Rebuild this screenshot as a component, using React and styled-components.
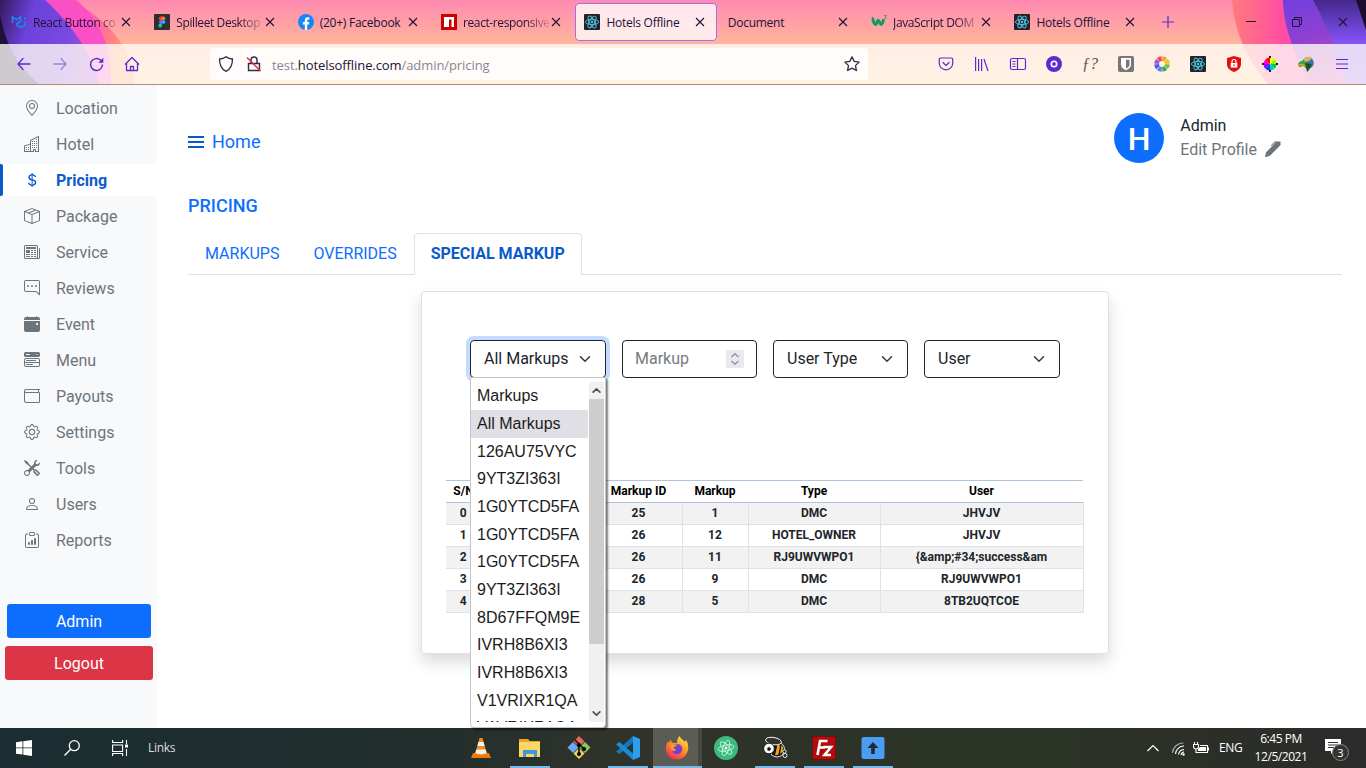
import React from "react";
import styled, { createGlobalStyle, css } from "styled-components";
import {
  BsGeoAlt, BsBuildings, BsCurrencyDollar, BsBoxSeam, BsNewspaper, BsChatRightDots,
  BsCalendarEventFill, BsMenuButtonWideFill, BsWallet, BsGear, BsTools, BsPerson,
  BsClipboardData, BsPenFill,
} from "react-icons/bs";

const GlobalStyle = createGlobalStyle`
  * { box-sizing: border-box; }
  body { margin: 0; background: #fff; overflow: hidden; font-family: Roboto, "Liberation Sans", sans-serif; font-size: 16px; line-height: 24px; color: #212529; }
  svg { display: block; flex: none; }
`;

const Screen = styled.div`
  width: 1366px;
  height: 768px;
  display: flex;
  flex-direction: column;
  overflow: hidden;
`;

/* ---------- browser chrome ---------- */
const Chrome = styled.header`
  position: relative;
  height: 85px;
  flex: none;
  border-bottom: 1px solid #b58a78;
  font-family: "Open Sans", "Noto Sans", sans-serif;
  color: #20123a;
`;
const ThemeArt = styled.svg`
  position: absolute;
  inset: 0;
`;
const TabStrip = styled.div`
  position: relative;
  height: 44px;
  padding: 3px 0 3px 2px;
  display: flex;
`;
const BrowserTab = styled.div`
  width: 143.35px;
  height: 38px;
  flex: none;
  display: flex;
  align-items: center;
  padding: 0 14px 0 9px;
  gap: 6px;
  ${(p) => p.$active && css`
    margin-right: 1.35px;
    width: 142px;
    padding-left: 8px;
    padding-right: 11px;
    border: 1px solid #a36df2;
    border-radius: 4px;
    background: rgba(255, 244, 246, 0.86);
  `}
`;
const TabTitle = styled.span`
  flex: 1;
  overflow: hidden;
  white-space: nowrap;
  font-size: 12px;
  line-height: 18px;
  padding-top: 2px;
  letter-spacing: ${(p) => (p.$fade ? "-0.4px" : "-0.25px")};
  margin-right: -4px;
  ${(p) => p.$fade && css`
    mask-image: linear-gradient(to right, #000 72%, rgba(0, 0, 0, 0.15) 100%);
  `}
`;
const NewTab = styled.div`
  display: flex;
  align-items: center;
  padding-left: 13px;
`;
const WindowButtons = styled.div`
  margin-left: auto;
  display: flex;
  align-items: center;
  gap: 36px;
  padding-right: 18px;
`;
const NavBar = styled.div`
  position: relative;
  height: 40px;
  display: flex;
  align-items: center;
  background: rgba(255, 252, 248, 0.79);
`;
const NavButtons = styled.div`
  width: 210px;
  display: flex;
  padding-left: 6px;
`;
const ToolButton = styled.div`
  width: 36px;
  height: 32px;
  display: flex;
  align-items: center;
  justify-content: center;
  color: #5a2bd0;
  opacity: ${(p) => (p.$dim ? 0.5 : 1)};
`;
const UrlBar = styled.div`
  width: 658px;
  height: 32px;
  border-radius: 4px;
  background: #fffcf9;
  display: flex;
  align-items: center;
  padding: 0 8px;
  color: #8b8496;
  font-size: 13px;
  svg + svg { margin-left: 12px; }
`;
const UrlText = styled.span`
  flex: 1;
  margin-left: 10px;
  padding-top: 2px;
  letter-spacing: -0.08px;
  b { font-weight: 400; color: #20123a; }
`;
const Extensions = styled.div`
  display: flex;
  margin-left: auto;
  padding-right: 6px;
`;
const FontQuery = styled.span`
  font: italic 16px "Liberation Serif", serif;
  color: #555;
`;

/* ---------- page ---------- */
const Page = styled.div`
  flex: 1;
  min-height: 0;
  display: flex;
`;
const Sidebar = styled.aside`
  width: 157px;
  background: #f8f9fa;
  padding-top: 7px;
  display: flex;
  flex-direction: column;
`;
const MenuItem = styled.div`
  height: 32px;
  margin-bottom: 4px;
  display: flex;
  align-items: center;
  gap: 16px;
  padding-left: 24px;
  line-height: 26px;
  span { padding-top: 2px; }
  color: #6c757d;
  ${(p) => p.$active && css`
    background: #fff;
    padding-left: 21px;
    color: #0a5acc;
    font-weight: 700;
    &::before {
      content: "";
      width: 3px;
      height: 32px;
      margin: 0 -16px 0 -21px;
      border-radius: 0 2px 2px 0;
      background: #0a5acc;
    }
    svg { margin-left: 21px; }
  `}
`;
const SideButtons = styled.div`
  padding-top: 44px;
  display: flex;
  flex-direction: column;
  align-items: center;
  gap: 8px;
`;
const SideButton = styled.button`
  width: ${(p) => p.$w}px;
  height: 34px;
  margin-left: 1px;
  border: 0;
  border-radius: 3.2px;
  background: ${(p) => p.$bg};
  color: #fff;
  font: 400 16px/24px Roboto, sans-serif;
  padding: 2px 0 0;
`;
const Main = styled.main`
  flex: 1;
  padding: 28px 24px 0 31px;
  display: flex;
  flex-direction: column;
`;
const TopBar = styled.div`
  height: 50px;
  display: flex;
  justify-content: space-between;
  padding-right: 61px;
`;
const HomeLink = styled.a`
  display: flex;
  align-items: center;
  align-self: flex-start;
  gap: 8px;
  margin-top: 17px;
  font-size: 18px;
  color: #0d6efd;
`;
const Profile = styled.div`
  display: flex;
  gap: 16px;
`;
const ProfileText = styled.div`
  padding-top: 1px;
`;
const Avatar = styled.div`
  width: 50px;
  height: 50px;
  border-radius: 50%;
  background: #0d6efd;
  color: #fff;
  font-size: 32px;
  font-weight: 500;
  line-height: 53px;
  text-align: center;
`;
const EditProfile = styled.div`
  display: flex;
  align-items: center;
  gap: 8px;
  color: #6c757d;
  svg { margin-top: -2px; }
`;
const PageTitle = styled.h1`
  margin: 31px 0 0;
  font-size: 18px;
  line-height: 24px;
  font-weight: 500;
  color: #0d6efd;
`;
const Tabs = styled.nav`
  height: 42px;
  margin-top: 15px;
  margin-bottom: 16px;
  border-bottom: 1px solid #dee2e6;
  display: flex;
`;
const TabLink = styled.a`
  height: 42px;
  padding: 8px 16px;
  border: 1px solid transparent;
  line-height: 23px;
  color: #0d6efd;
  ${(p) => p.$active && css`
    border-color: #dee2e6 #dee2e6 #fff;
    border-radius: 4px 4px 0 0;
    background: #fff;
    color: #0a5acc;
    font-weight: 700;
  `}
`;
const Card = styled.section`
  width: 688px;
  height: 363px;
  align-self: center;
  border: 1px solid #dee2e6;
  border-radius: 4px;
  box-shadow: 0 8px 16px rgba(0, 0, 0, 0.15);
  padding: 48px 24px 0;
`;
const Filters = styled.div`
  display: grid;
  grid-template-columns: 136px 135px 135px 136px;
  gap: 16px;
  padding: 0 24px;
`;
const Field = styled.div`
  position: relative;
  height: 38px;
  border: 1px solid #212529;
  border-radius: 4px;
  padding: 0 14px 0 ${(p) => (p.$placeholder ? 12 : 13)}px;
  display: flex;
  align-items: center;
  justify-content: space-between;
  line-height: 36px;
  color: ${(p) => (p.$placeholder ? "#757b81" : "#212529")};
  box-shadow: ${(p) => (p.$focus ? "0 0 0 4px #c2dbfe" : "none")};
`;
const Spinner = styled.span`
  width: 18px;
  height: 18px;
  background: #e9e9ed;
  display: flex;
  align-items: center;
  justify-content: center;
  margin-right: -2px;
`;
const Dropdown = styled.div`
  position: absolute;
  z-index: 2;
  left: -1px;
  top: 36px;
  width: 136px;
  height: 351px;
  border: 1px solid #c4c4cc;
  border-radius: 2px 2px 4px 4px;
  background: #fff;
  box-shadow: 2px 2px 2px rgba(0, 0, 0, 0.5);
  display: flex;
  padding: 4px 1px 5px 0;
`;
const OptionList = styled.div`
  flex: 1;
  overflow: hidden;
  padding-top: 0.35px;
`;
const Option = styled.div`
  height: 27.67px;
  padding-left: 6px;
  font: 16px/27.67px "Liberation Sans", sans-serif;
  color: #1c1b22;
  background: ${(p) => (p.$selected ? "#e0dfe6" : "transparent")};
  margin-right: 1px;
`;
const ScrollBar = styled.div`
  width: 15px;
  background: #f0f0f0;
  display: flex;
  flex-direction: column;
  justify-content: space-between;
  align-items: center;
`;
const Arrow = styled.div`
  height: 17px;
  display: flex;
  align-items: center;
`;
const Thumb = styled.div`
  width: 15px;
  height: 245px;
  background: #cdcdcd;
  margin-bottom: auto;
`;
const Table = styled.table`
  width: 637px;
  margin-top: 102px;
  border-collapse: collapse;
  table-layout: fixed;
  font-size: 12px;
  line-height: 16px;
  font-weight: 700;
  text-align: center;
  th, td { height: 22px; padding: 0 0 1px; }
  td { padding-bottom: 2px; }
  th { color: #000; border-top: 1px solid #b0c4de; border-bottom: 1px solid #b0c4de; }
  td { border-right: 1px solid #dee2e6; border-bottom: 1px solid #dee2e6; }
  tbody tr:nth-child(odd) { background: #f2f2f2; }
`;

/* ---------- taskbar ---------- */
const Taskbar = styled.footer`
  height: 40px;
  flex: none;
  display: flex;
  background: linear-gradient(to right, #1b2d31 0, #1f2e2e 20%, #232f2d 33%, #30332a 45%, #2b3326 75%, #2c2f28 88%, #2b2c2b);
  color: #fff;
  font: 12px/18px "Open Sans", "Noto Sans", sans-serif;
`;
const StartArea = styled.div`
  width: 457px;
  display: flex;
  align-items: center;
`;
const StartCell = styled.div`
  width: 48px;
  display: flex;
  justify-content: center;
`;
const LinksLabel = styled.span`
  margin-left: 4px;
  color: #ddd;
  letter-spacing: -0.3px;
`;
const TaskIcon = styled.div`
  width: 49px;
  height: 40px;
  display: flex;
  align-items: center;
  justify-content: center;
  padding-right: 1px;
  background: ${(p) =>
    p.$active
      ? "linear-gradient(#76b9ed, #76b9ed) no-repeat 0 100% / 100% 2px, linear-gradient(to right, #5b5d55 45px, #464840 45px)"
      : p.$open
      ? "linear-gradient(#76b9ed, #76b9ed) no-repeat 4px 100% / 40px 2px"
      : "none"};
`;
const Tray = styled.div`
  margin-left: auto;
  display: flex;
  align-items: center;
  padding-right: 16px;
`;
const Battery = styled.svg`
  margin-left: 6px;
`;
const Lang = styled.span`
  margin: 0 0 0 10px;
  width: 24px;
  letter-spacing: -0.3px;
`;
const Clock = styled.div`
  width: 62px;
  margin: 0 12px 0 7px;
  text-align: center;
  letter-spacing: -0.45px;
`;

/* ---------- drawings ---------- */
const Close = () => (
  <svg width="10" height="10" viewBox="0 0 10 10" stroke="#20123a" strokeWidth="1.1"><path d="M1 1l8 8M9 1L1 9" /></svg>
);
const ReactLogo = () => (
  <svg width="16" height="16" viewBox="0 0 16 16" fill="none" stroke="#56c7e4" strokeWidth=".9">
    <rect width="16" height="16" rx="1" fill="#20232a" stroke="none" />
    <ellipse cx="8" cy="8" rx="6.6" ry="2.6" />
    <ellipse cx="8" cy="8" rx="6.6" ry="2.6" transform="rotate(60 8 8)" />
    <ellipse cx="8" cy="8" rx="6.6" ry="2.6" transform="rotate(120 8 8)" />
    <circle cx="8" cy="8" r="1.2" fill="#56c7e4" stroke="none" />
  </svg>
);
const MuiLogo = () => (
  <svg width="16" height="16" viewBox="0 0 16 16" fill="none" stroke="#1b86f0" strokeWidth="1.7">
    <path d="M1.500 9V3l4 2.600 4-2.600v4.500L6 9.600v1.900l4 2.100 4-2.300V7.500M14 3.400v2" />
  </svg>
);
const FigmaLogo = () => (
  <svg width="16" height="16" viewBox="0 0 16 16">
    <rect width="16" height="16" rx="1" fill="#2c2f33" />
    <path d="M8 2.500H6.800a1.900 1.900 0 000 3.800H8z" fill="#f24e1e" /><path d="M8 2.500h1.300a1.900 1.900 0 010 3.800H8z" fill="#ff7262" />
    <path d="M8 6.300H6.800a1.800 1.800 0 000 3.600H8z" fill="#a259ff" /><circle cx="9.600" cy="8.100" r="1.800" fill="#1abcfe" />
    <path d="M8 9.900H6.800a1.800 1.800 0 101.200 1.800z" fill="#0acf83" />
  </svg>
);
const FacebookLogo = () => (
  <svg width="16" height="16" viewBox="0 0 16 16">
    <circle cx="8" cy="8" r="8" fill="#1688f5" />
    <path d="M6.800 16v-5.500H4.900V8h1.900V6.400c0-2 1.200-3.100 3-3.100l1.600.100v2h-1c-1 0-1.200.600-1.200 1.200V8h2.100l-.400 2.500H9.200V16z" fill="#fff" />
  </svg>
);
const NpmLogo = () => (
  <svg width="16" height="16" viewBox="0 0 16 16"><path fill="#cb0000" d="M0 0h16v16H0z" /><path fill="#fff" d="M3 3h10v10h-2.500V5.500H8V13H3z" /></svg>
);
const W3Logo = () => (
  <svg width="16" height="16" viewBox="0 0 16 16" fill="none" stroke="#0a9c62">
    <path strokeWidth="3" d="M.800 4.200c1.500 0 1.800 6.300 3.600 6.300 1.500 0 1.900-4.300 2.800-4.300s1.500 4.300 3 4.300c1.200 0 1.800-2.500 2.400-5.300" />
    <path strokeWidth=".8" d="M13.300 1.500h2L14.200 3c1.500.200 1.200 1.800-.900 1.600" />
  </svg>
);

const TABS = [
  { icon: <MuiLogo />, title: "React Button co", fade: true },
  { icon: <FigmaLogo />, title: "Spilleet Desktop", fade: true },
  { icon: <FacebookLogo />, title: "(20+) Facebook" },
  { icon: <NpmLogo />, title: "react-responsive", fade: true },
  { icon: <ReactLogo />, title: "Hotels Offline", active: true },
  { title: "Document" },
  { icon: <W3Logo />, title: "JavaScript DOM", fade: true },
  { icon: <ReactLogo />, title: "Hotels Offline" },
];

const wheel = ["#f2a33a", "#f0c12c", "#7cc242", "#3aa757", "#4a8df0", "#5a55e8", "#a54fe0", "#f04a4a"];
const vivid = ["#ff0", "#8f0", "#0c4", "#0cc", "#04f", "#80f", "#f0c", "#f00"];
const Petals = () => (
  <svg width="16" height="16" viewBox="-8 -8 16 16">
    {wheel.map((c, i) => (
      <path key={c} d="M-1.200 -3L-2.500 -7.400A7.800 7.800 0 012.500 -7.400L1.200 -3z" fill={c} transform={`rotate(${i * 45 + 22})`} />
    ))}
  </svg>
);
const ColorWheel = () => (
  <svg width="16" height="16" viewBox="-8 -8 16 16">
    {vivid.map((c, i) => (
      <path key={c} d="M0 0L-2.500 -6A6.500 6.500 0 012.500 -6z" fill={c} transform={`rotate(${i * 45 + 22})`} />
    ))}
    <path d="M-8-1h2v2h-2zM6-1h2v2H6zM-1-8h2v2h-2zM-1 6h2v2h-2z" fill="#222" />
  </svg>
);

const EXTENSIONS = [
  <svg width="16" height="16" viewBox="0 0 16 16" fill="none" stroke="currentColor" strokeWidth="1.2" strokeLinecap="round"><path d="M2.500 2h11A1.200 1.200 0 0114.700 3.200v4a6.700 6.700 0 01-13.400 0v-4A1.200 1.200 0 012.500 2zM5 6.500l3 3 3-3" /></svg>,
  <svg width="16" height="16" viewBox="0 0 16 16" fill="none" stroke="currentColor" strokeWidth="1.2"><path d="M1.600 1v14M4.600 3v12M7.600 3v12M10 3l4 12" /></svg>,
  <svg width="18" height="16" viewBox="0 0 18 16" fill="none" stroke="currentColor" strokeWidth="1.200"><rect x="1.500" y="2.500" width="15" height="11" rx="1.500" /><path d="M8.500 2.500v11M3.500 5.500h3M3.500 8h3M3.500 10.500h3" /></svg>,
  <svg width="16" height="16" viewBox="0 0 16 16"><circle cx="8" cy="8" r="8" fill="#5a2bd0" /><circle cx="8" cy="8" r="2.700" fill="none" stroke="#fff" strokeWidth="1.600" /></svg>,
  <FontQuery>ƒ?</FontQuery>,
  <svg width="16" height="16" viewBox="0 0 16 16"><rect width="16" height="16" rx="2" fill="#777" /><path d="M3 2h10v6.500c0 3-2.500 4.500-5 5.700-2.500-1.200-5-2.700-5-5.700z" fill="#fff" /><path d="M8 3.700h3.500v5c0 1.600-1.500 2.600-3.500 3.700z" fill="#777" /></svg>,
  <Petals />,
  <ReactLogo />,
  <svg width="16" height="16" viewBox="0 0 16 16"><path d="M8 0l7 2v6c0 4-3 6.500-7 8-4-1.500-7-4-7-8V2z" fill="#e01010" /><path d="M4.700 7h6.600v4.600H4.700z" fill="#fff" /><path d="M6 7V5.500a2 2 0 014 0V7" fill="none" stroke="#fff" strokeWidth="1.200" /><path d="M7.500 8.300h1v2h-1z" fill="#e01010" /></svg>,
  <ColorWheel />,
  <svg width="16" height="16" viewBox="0 0 16 16"><circle cx="10" cy="6.800" r="5.800" fill="#3f73a8" /><path d="M5.500 3c3-3 7-2.500 8.500-1l-3 3-4 1z" fill="#d8b45a" /><path d="M0 8c2-4 7-4 8.500-1L5 11 1 11z" fill="#39a53b" /><path d="M.500 9.500c3-2 5-1 7 1" stroke="#f0a020" fill="none" strokeWidth="1.500" /><path d="M2 12c2-2 4-2 5 0" stroke="#e8e0d0" fill="none" strokeWidth="1" /><path d="M7 7l7 1-3 6-2 2-1-5z" fill="#14561f" /></svg>,
  <svg width="14" height="14" viewBox="0 0 14 14" stroke="currentColor" strokeWidth="1.200"><path d="M1 2.500h12M1 7h12M1 11.500h12" /></svg>,
];

const Chevron = ({ size = 16, up, color = "#343a40", w = 2 }) => (
  <svg width={size} height={size} viewBox="0 0 16 16" fill="none" stroke={color} strokeWidth={w} strokeLinecap="round" strokeLinejoin="round">
    <path d={up ? "M2 11l6-6 6 6" : "M2 5l6 6 6-6"} />
  </svg>
);

const MENU = [
  [BsGeoAlt, "Location"], [BsBuildings, "Hotel"], [BsCurrencyDollar, "Pricing"], [BsBoxSeam, "Package"],
  [BsNewspaper, "Service"], [BsChatRightDots, "Reviews"], [BsCalendarEventFill, "Event"],
  [BsMenuButtonWideFill, "Menu"], [BsWallet, "Payouts"], [BsGear, "Settings"], [BsTools, "Tools"],
  [BsPerson, "Users"], [BsClipboardData, "Reports"],
];
const OPTIONS = ["Markups", "All Markups", "126AU75VYC", "9YT3ZI363I", "1G0YTCD5FA", "1G0YTCD5FA", "1G0YTCD5FA", "9YT3ZI363I", "8D67FFQM9E", "IVRH8B6XI3", "IVRH8B6XI3", "V1VRIXR1QA", "V1VRIXR1QA"];
const ROWS = [
  [0, "", 25, 1, "DMC", "JHVJV"],
  [1, "", 26, 12, "HOTEL_OWNER", "JHVJV"],
  [2, "", 26, 11, "RJ9UWVWPO1", "{&amp;#34;success&am"],
  [3, "", 26, 9, "DMC", "RJ9UWVWPO1"],
  [4, "", 28, 5, "DMC", "8TB2UQTCOE"],
];

const TASKS = [
  { icon: <svg width="24" height="24" viewBox="0 0 24 24"><path d="M4 17h16l2 5H2z" fill="#e87a10" /><path d="M10.500 2h3l4.500 16c-2 2-10 2-12 0z" fill="#f28a1c" /><path d="M9.500 6h5l1.100 4H8.400zM7.300 13.500h9.400l1 3.500c-3 1.500-8 1.500-11.400 0z" fill="#f2f2f2" /></svg> },
  { open: true, icon: <svg width="24" height="24" viewBox="0 0 24 24"><path d="M1 3h9l2 2h10v16H1z" fill="#e5a82c" /><path d="M1 6h21v15H1z" fill="#fcd766" /><path d="M5 14h14v7h-3v-3H8v3H5z" fill="#3f97dc" /></svg> },
  { icon: <svg width="24" height="24" viewBox="0 0 24 24"><path d="M12 0l5.500 5.500L12 11 6.500 5.500z" fill="#e8655a" /><path d="M6 6l5.500 5.500L6 17 .500 11.500z" fill="#6fa8ee" /><path d="M18 6l5.500 5.500L18 17l-5.500-5.500z" fill="#8cc35a" /><path d="M12 12l5.500 5.500L12 23l-5.500-5.500z" fill="#f3d25c" /><path d="M8 4l4 4v10M12 8l5 5" stroke="#222" strokeWidth="1.800" fill="none" /><circle cx="12" cy="18" r="2" /><circle cx="17" cy="13" r="2" /><circle cx="12" cy="9" r="2" /></svg> },
  { open: true, icon: <svg width="24" height="24" viewBox="0 0 24 24"><path d="M17 0l7 3v18l-7 3z" fill="#2ba0ef" /><path d="M17 0v6.500L3.500 18 0 15.800z" fill="#1277bd" /><path d="M17 24v-6.500L3.500 6 0 8.200z" fill="#168bd6" /></svg> },
  { active: true, icon: <svg width="24" height="24" viewBox="0 0 24 24"><defs><linearGradient id="fox" x1=".8" y1="0" x2=".2" y2="1"><stop offset="0" stopColor="#ffe14a" /><stop offset=".45" stopColor="#ff9420" /><stop offset="1" stopColor="#f5205e" /></linearGradient></defs><path d="M14.500 0c1 3 4.500 4 5.500 6l1-2c2 3 2.800 6.500 2 10-1.200 5.500-5.500 9.500-11 9.500C5.500 23.500.800 18.500.800 12.500c0-3 1-5.500 2.500-7.500v2.500L6 3.500c0 2 .500 3 2 3.500h4c0-3 1-5.500 2.500-7z" fill="url(#fox)" /><circle cx="12" cy="13" r="5.300" fill="#7540cf" /><path d="M5.500 9c3-1.500 5 0 7-.500 0 1.500-3.500 1.500-3.500 3.500 0 1 1 1.500 2.500 1.500-2 2.500-5 1.500-6-.500z" fill="#ff9a25" /></svg> },
  { icon: <svg width="24" height="24" viewBox="0 0 24 24" fill="none" stroke="#d8fbe8" strokeWidth=".8"><circle cx="12" cy="12" r="12" fill="#3dbb7c" stroke="none" /><ellipse cx="12" cy="12" rx="8" ry="3" transform="rotate(-12 12 12)" /><ellipse cx="12" cy="12" rx="8" ry="3" transform="rotate(48 12 12)" /><ellipse cx="12" cy="12" rx="8" ry="3" transform="rotate(108 12 12)" /><circle cx="12" cy="12" r="1.200" fill="#fff" /></svg> },
  { open: true, icon: <svg width="25" height="24" viewBox="0 0 25 24" stroke="#fff" strokeWidth=".9"><circle cx="14" cy="13.500" r="7.500" fill="#111" /><path d="M14.500 8.500l2.500 1-1.500 9-3.500 1zM18.500 9l1.500 2-.500 5-2.500 2z" fill="#f2a516" stroke="none" /><ellipse cx="10.500" cy="5" rx="8" ry="3.600" fill="#333" transform="rotate(10 10 5)" /><circle cx="6" cy="12.500" r="5.300" fill="#fff" stroke="#111" /><circle cx="6" cy="13" r="2.300" fill="#111" /><circle cx="21.500" cy="15.500" r="1.700" fill="#222" /><circle cx="22" cy="19.500" r="2" fill="#222" /></svg> },
  { open: true, icon: <svg width="24" height="24" viewBox="0 0 24 24"><path d="M.500.500h23v23H.500z" fill="#b30b0b" stroke="#7d0707" strokeDasharray="2 1" /><path d="M5.500 19L8 5h7.500M7 11.500h6M11.500 11h7.500L12.500 19H19" fill="none" stroke="#fff" strokeWidth="2.600" /></svg> },
  { open: true, icon: <svg width="24" height="24" viewBox="0 0 24 24"><rect x=".500" y="1" width="23" height="22" rx="2" fill="#4a9df0" /><path d="M12 6l5.500 6h-3.700v6h-3.600v-6H6.500z" fill="#222a30" /></svg> },
];

export default function App() {
  return (
    <Screen>
      <GlobalStyle />
      <Chrome>
        <ThemeArt width="1366" height="84" viewBox="0 0 1366 84" preserveAspectRatio="none">
          <defs>
            <linearGradient id="sky" x1="0" y1="0" x2="0" y2="1"><stop offset="0" stopColor="#ff8ab0" /><stop offset=".52" stopColor="#ffb49c" /><stop offset="1" stopColor="#ffd0a0" /></linearGradient>
            <linearGradient id="rose" gradientUnits="userSpaceOnUse" x1="80" y1="0" x2="130" y2="50"><stop offset="0" stopColor="#f864b8" /><stop offset=".5" stopColor="#ff6f9a" /><stop offset="1" stopColor="#ff9a68" /></linearGradient>
            <linearGradient id="violet" gradientUnits="userSpaceOnUse" x1="0" y1="0" x2="95" y2="30"><stop offset="0" stopColor="#351a60" /><stop offset=".35" stopColor="#6c42dc" /><stop offset=".75" stopColor="#7a48e0" /><stop offset="1" stopColor="#a04cd8" /></linearGradient>
            <linearGradient id="hot" x1="0" y1="0" x2="1" y2="0"><stop offset="0" stopColor="#ff7a7c" /><stop offset=".4" stopColor="#ff4ca4" /><stop offset="1" stopColor="#f444ae" /></linearGradient>
            <linearGradient id="dusk" x1="0" y1="0" x2=".3" y2="1"><stop offset="0" stopColor="#7040e0" /><stop offset=".5" stopColor="#9040d0" /><stop offset="1" stopColor="#d050c0" /></linearGradient>
            <linearGradient id="iris" x1="0" y1="0" x2="0" y2="1"><stop offset="0" stopColor="#44288c" /><stop offset=".5" stopColor="#8353f5" /><stop offset="1" stopColor="#8f5ff8" /></linearGradient>
          </defs>
          <path d="M0 0h1366v84H0z" fill="url(#sky)" />
          <path d="M70 0C108 18 133 50 135 84H0V0z" fill="url(#rose)" />
          <path d="M76 0C104 22 112 55 111 84H0V0z" fill="#fa50c4" />
          <path d="M45 0C72 24 94 58 99 84H0V0z" fill="url(#violet)" />
          <path d="M0 14C6 48 20 68 39 84H0z" fill="#20103a" />
          <path d="M1232 0c3 35 16 60 36 84h98V0z" fill="url(#hot)" />
          <path d="M1283 0c0 30 15 60 27 84h56V0z" fill="url(#dusk)" />
          <path d="M1313 0c12 22 24 50 35 84h18V0z" fill="url(#iris)" />
          <path d="M1356 0l10 30V0z" fill="#1c0d30" />
        </ThemeArt>
        <TabStrip>
          {TABS.map((t, i) => (
            <BrowserTab key={i} $active={t.active}>
              {t.icon}
              <TabTitle $fade={t.fade}>{t.title}</TabTitle>
              <Close />
            </BrowserTab>
          ))}
          <NewTab><svg width="12" height="12" viewBox="0 0 12 12" stroke="#5a2bd0" strokeWidth="1.200"><path d="M6 0v12M0 6h12" /></svg></NewTab>
          <WindowButtons>
            <svg width="10" height="10" viewBox="0 0 10 10" stroke="#20123a"><path d="M0 4.500h10" /></svg>
            <svg width="10" height="10" viewBox="0 0 10 10" fill="none" stroke="#20123a"><path d="M.500 2.500h7v7h-7zM2.500 2.500v-2h7v7h-2" /></svg>
            <Close />
          </WindowButtons>
        </TabStrip>
        <NavBar>
          <NavButtons>
            <ToolButton><svg width="14" height="14" viewBox="0 0 14 14" fill="none" stroke="currentColor" strokeWidth="1.300" strokeLinecap="round"><path d="M13 7H1M6 1.500L1 7l5 5.500" /></svg></ToolButton>
            <ToolButton $dim><svg width="14" height="14" viewBox="0 0 14 14" fill="none" stroke="currentColor" strokeWidth="1.300" strokeLinecap="round"><path d="M1 7h12M8 1.500L13 7l-5 5.500" /></svg></ToolButton>
            <ToolButton><svg width="15" height="15" viewBox="0 0 15 15" fill="none" stroke="currentColor" strokeWidth="1.400"><path d="M13.500 7.500A6 6 0 1111.500 3L13 4.500" /><path d="M14.300.800v5H9.300z" fill="currentColor" stroke="none" /></svg></ToolButton>
            <ToolButton><svg width="16" height="16" viewBox="0 0 16 16" fill="none" stroke="currentColor" strokeWidth="1.300" strokeLinejoin="round"><path d="M1 8.500l7-7 7 7M2.500 7v7.500h11V7M6.500 14.500v-4h3v4" /></svg></ToolButton>
          </NavButtons>
          <UrlBar>
            <svg width="16" height="16" viewBox="0 0 16 16" fill="none" stroke="#35274c" strokeWidth="1.300"><path d="M8 .700c2 1.700 4 2.200 6.500 2.300 0 6-1.500 10-6.500 12.300C3 13 1.500 9 1.500 3 4 2.900 6 2.400 8 .700z" /></svg>
            <svg width="16" height="16" viewBox="0 0 16 16" fill="none" stroke="#35274c" strokeWidth="1.400"><path d="M2.500 7.500h11v7h-11zM5 7V4a3 3 0 016 0v3.500" /><path d="M1 1.500L14.500 15" stroke="#e22850" /></svg>
            <UrlText>test.<b>hotelsoffline.com</b>/admin/pricing</UrlText>
            <svg width="16" height="16" viewBox="0 0 16 16" fill="none" stroke="#35274c" strokeWidth="1.300" strokeLinejoin="round"><path d="M8 .900l2.200 4.500 4.900.700-3.600 3.500.900 4.900L8 12.200l-4.400 2.300.900-4.900L.900 6.100l4.900-.700z" /></svg>
          </UrlBar>
          <Extensions>{EXTENSIONS.map((e, i) => <ToolButton key={i}>{e}</ToolButton>)}</Extensions>
        </NavBar>
      </Chrome>

      <Page>
        <Sidebar>
          {MENU.map(([Icon, label]) => (
            <MenuItem key={label} $active={label === "Pricing"}><Icon size={16} /><span>{label}</span></MenuItem>
          ))}
          <SideButtons>
            <SideButton $w={144} $bg="#0d6efd">Admin</SideButton>
            <SideButton $w={148} $bg="#dc3545">Logout</SideButton>
          </SideButtons>
        </Sidebar>
        <Main>
          <TopBar>
            <HomeLink>
              <svg width="16" height="12" viewBox="0 0 16 12" fill="#0a5acc"><path d="M0 0h16v2H0zM0 5h16v2H0zM0 10h16v2H0z" /></svg>
              Home
            </HomeLink>
            <Profile>
              <Avatar>H</Avatar>
              <ProfileText>
                Admin
                <EditProfile>Edit Profile <BsPenFill size={16} /></EditProfile>
              </ProfileText>
            </Profile>
          </TopBar>
          <PageTitle>PRICING</PageTitle>
          <Tabs>
            <TabLink>MARKUPS</TabLink>
            <TabLink>OVERRIDES</TabLink>
            <TabLink $active>SPECIAL MARKUP</TabLink>
          </Tabs>
          <Card>
            <Filters>
              <Field $focus>
                All Markups <Chevron size={12} />
                <Dropdown>
                  <OptionList>
                    {OPTIONS.map((o, i) => <Option key={i} $selected={i === 1}>{o}</Option>)}
                  </OptionList>
                  <ScrollBar>
                    <Arrow><Chevron up size={9} color="#505050" w={3} /></Arrow>
                    <Thumb />
                    <Arrow><Chevron size={9} color="#505050" w={3} /></Arrow>
                  </ScrollBar>
                </Dropdown>
              </Field>
              <Field $placeholder>
                Markup
                <Spinner>
                  <svg width="8" height="12" viewBox="0 0 8 12" fill="none" stroke="#8f8f9d" strokeWidth="1.300"><path d="M.500 4L4 .800 7.500 4M.500 8L4 11.200 7.500 8" /></svg>
                </Spinner>
              </Field>
              <Field>User Type <Chevron size={12} /></Field>
              <Field>User <Chevron size={12} /></Field>
            </Filters>
            <Table>
              <colgroup><col width="35" /><col width="114" /><col width="87" /><col width="66" /><col width="132" /><col width="203" /></colgroup>
              <thead><tr><th>S/N</th><th /><th>Markup ID</th><th>Markup</th><th>Type</th><th>User</th></tr></thead>
              <tbody>
                {ROWS.map((r) => <tr key={r[0]}>{r.map((c, i) => <td key={i}>{c}</td>)}</tr>)}
              </tbody>
            </Table>
          </Card>
        </Main>
      </Page>

      <Taskbar>
        <StartArea>
          <StartCell><svg width="16" height="16" viewBox="0 0 16 16" fill="#fff"><path d="M0 2.200L6.500 1.300v6.200H0zM7.300 1.200L16 0v7.500H7.300zM0 8.300h6.500v6.300L0 13.700zM7.300 8.300H16V16l-8.700-1.200z" /></svg></StartCell>
          <StartCell><svg width="16" height="16" viewBox="0 0 16 16" fill="none" stroke="#fff" strokeWidth="1.300"><circle cx="10.300" cy="5.700" r="5" /><path d="M6.700 9.300L.500 15.500" /></svg></StartCell>
          <StartCell><svg width="16" height="16" viewBox="0 0 16 16" fill="none" stroke="#fff" strokeWidth="1.100"><path d="M.600 0v2.500h10V0M.600 5h10v6.500H.600zM.600 16v-2.500h10V16M14.500 0v4M14.500 9v7" /><path d="M13 4.500h3v3h-3z" fill="#fff" stroke="none" /></svg></StartCell>
          <LinksLabel>Links</LinksLabel>
        </StartArea>
        {TASKS.map((t, i) => <TaskIcon key={i} $open={t.open} $active={t.active}>{t.icon}</TaskIcon>)}
        <Tray>
          <svg width="12" height="8" viewBox="0 0 12 8" fill="none" stroke="#fff" strokeWidth="1.200"><path d="M.500 7L6 1.500 11.500 7" /></svg>
          <svg width="28" height="16" viewBox="0 0 28 16" fill="none" stroke="#fff" strokeWidth="1.100">
            <g transform="translate(13 2)"><path d="M.500 11A10.500 10.500 0 0111.500 1" stroke="#aaa" /><path d="M3.500 12A8.500 8.500 0 0112 4M6.500 12.500A6 6 0 0112 7.500M9 13a3.500 3.500 0 013-3" /><circle cx="11.500" cy="12.500" r="1.200" fill="#fff" stroke="none" /></g>
          </svg>
          <Battery width="16" height="12" viewBox="0 0 16 12" fill="none" stroke="#fff" strokeWidth="1.100"><path d="M1.500 0v2M4.500 0v2M.500 2.500h5v2a2 2 0 01-5 0zM3 6.500v4h11.500v-7H7" /><path d="M7 5h6v4H5V7zM15 5.500h1v3h-1z" fill="#fff" stroke="none" /></Battery>
          <Lang>ENG</Lang>
          <Clock>6:45 PM<br />12/5/2021</Clock>
          <svg width="26" height="26" viewBox="0 0 26 26"><path d="M1 4h16v12H10l-3 3v-3H1z" fill="#fff" /><path d="M4 7.500h10M4 10h10M4 12.500h6" stroke="#333" /><circle cx="16.500" cy="17.500" r="8" fill="#333431" stroke="#888" /><text x="16.500" y="21.500" fontSize="11" fill="#fff" textAnchor="middle">3</text></svg>
        </Tray>
      </Taskbar>
    </Screen>
  );
}
